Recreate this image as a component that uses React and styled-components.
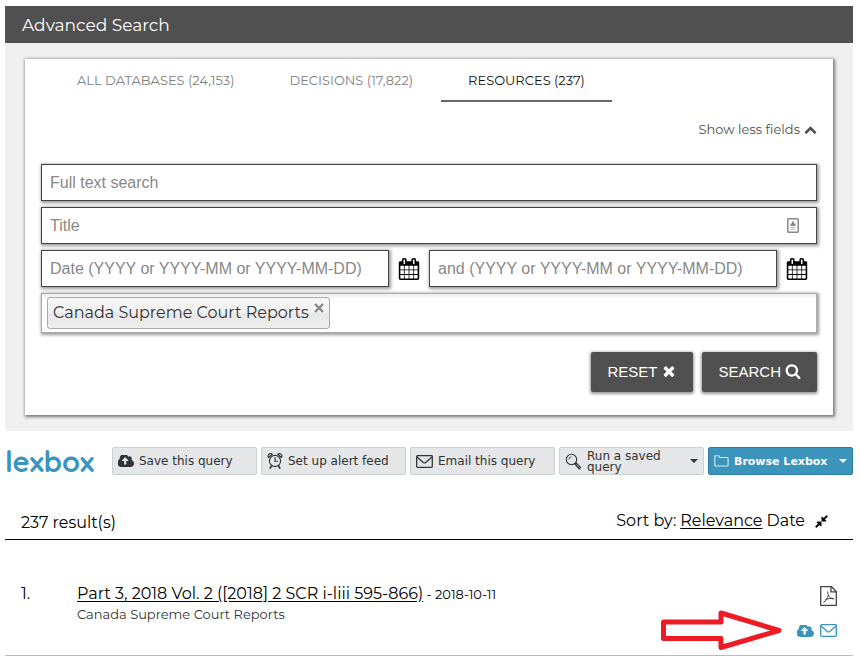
import styled, { createGlobalStyle } from "styled-components";

const GlobalStyle = createGlobalStyle`
  * {
    box-sizing: border-box;
  }

  body {
    margin: 0;
    background: #fff;
    color: #000;
    font-family: Montserrat, Inter, "Liberation Sans", sans-serif;
    font-size: 16px;
    font-weight: 400;
  }
`;

const Page = styled.main`
  padding: 6px 7px 0 5px;
`;

const Heading = styled.h1`
  margin: 0;
  padding: 1px 17px 0;
  background: #505050;
  color: #fff;
  font-size: 17px;
  font-weight: 400;
  line-height: 36px;
`;

const SearchArea = styled.section`
  padding: 16px 20px;
  background: #f0f0f0;
`;

const Card = styled.form`
  padding: 0 16px 23px;
  background: #fff;
  box-shadow: 1px 1px 3px 1px rgba(0, 0, 0, 0.5);
`;

const Tabs = styled.nav`
  display: flex;
  padding-left: 9px;
`;

const Tab = styled.a`
  margin-right: 1px;
  padding: 1px 27px 0;
  border-bottom: 2px solid ${({ $active }) => ($active ? "#666" : "transparent")};
  color: ${({ $active }) => ($active ? "#111" : "#808080")};
  font-size: 13px;
  line-height: 40px;
  text-decoration: none;
`;

const FieldsToggle = styled.button`
  display: flex;
  align-items: center;
  gap: 4px;
  margin: 17px 0 25px auto;
  padding: 0;
  border: 0;
  background: none;
  color: #505050;
  font-family: inherit;
  font-size: 13px;
  line-height: 20px;
`;

const Fields = styled.div`
  display: grid;
  gap: 6px;
`;

const Field = styled.label`
  display: flex;
  align-items: center;
  min-width: 0;
  height: 37px;
  padding: 0 17px 0 8px;
  border: 1px solid #444;
  background: #fff;
  box-shadow: 1px 1px 3px 1px rgba(0, 0, 0, 0.4);
`;

const Input = styled.input`
  flex: 1;
  min-width: 0;
  padding: 0;
  border: 0;
  outline: 0;
  background: none;
  font-family: "Liberation Sans", Arial, sans-serif;
  font-size: 16px;
  line-height: 20px;

  &::placeholder {
    color: #888;
    opacity: 1;
  }
`;

const DateRow = styled.div`
  display: grid;
  grid-template-columns: 1fr 40px 1fr 40px;
`;

const IconButton = styled.button`
  display: flex;
  align-items: center;
  justify-content: center;
  padding: 0;
  border: 0;
  background: none;
  color: #000;
`;

const TagField = styled.div`
  display: flex;
  height: 40px;
  padding: 3px 5px;
  border: 1px solid #aaa;
  background: linear-gradient(#eee 1%, #fff 15%);
  box-shadow: 1px 1px 3px 1px rgba(0, 0, 0, 0.4);
`;

const Tag = styled.span`
  display: flex;
  gap: 5px;
  padding: 0 5px;
  border: 1px solid #aaa;
  border-radius: 3px;
  background: linear-gradient(#f4f4f4 20%, #f0f0f0 50%, #e8e8e8 52%, #eee);
  color: #333;
  font-size: 16px;
  line-height: 29px;
`;

const TagRemove = styled.button`
  align-self: flex-start;
  display: flex;
  margin-top: 5px;
  padding: 0;
  border: 0;
  background: none;
  color: #888;
`;

const FormActions = styled.div`
  display: flex;
  justify-content: flex-end;
  gap: 9px;
  margin-top: 19px;
`;

const ActionButton = styled.button`
  display: flex;
  align-items: center;
  gap: 4px;
  height: 40px;
  padding: 0 16px 2px;
  border: 0;
  border-radius: 2px;
  background: #505050;
  box-shadow: 0 1px 3px 1px rgba(0, 0, 0, 0.4);
  color: #fff;
  font-family: "Liberation Sans", Arial, sans-serif;
  font-size: 15px;
`;

const Lexbox = styled.section`
  display: grid;
  grid-template-columns: 103px repeat(5, 1fr);
  align-items: center;
  gap: 4px;
  margin-top: 16px;
`;

const Logo = styled.span`
  color: #3a95bd;
  font-family: Quicksand, Nunito, Comfortaa, "Varela Round", Lato, sans-serif;
  font-size: 29px;
  font-weight: 700;
  line-height: 28px;
`;

const ToolButton = styled.button`
  display: flex;
  align-items: center;
  gap: 5px;
  height: 28px;
  padding: 0 5px;
  border: 1px solid ${({ $primary }) => ($primary ? "#2e7da0" : "#ccd0d2")};
  border-radius: 2px;
  background: ${({ $primary }) => ($primary ? "#3a94bb" : "#e4e6e8")};
  color: ${({ $primary }) => ($primary ? "#fff" : "#333")};
  font-family: "DejaVu Sans", Verdana, sans-serif;
  font-size: ${({ $primary }) => ($primary ? 11 : 12)}px;
  font-weight: ${({ $primary }) => ($primary ? 700 : 400)};
  line-height: 11px;
  text-align: left;

  svg {
    flex: none;
  }
`;

const ToolLabel = styled.span`
  flex: 1;
  padding-top: 1px;
`;

const ResultsBar = styled.header`
  display: flex;
  align-items: flex-end;
  justify-content: space-between;
  margin-top: 32px;
  padding: 0 24px 2px 16px;
  border-bottom: 1px solid #000;
  line-height: 28px;
`;

const Sort = styled.div`
  display: flex;
  gap: 4px;
  padding-bottom: 2px;
`;

const TextLink = styled.a`
  color: inherit;
  text-decoration: ${({ $underline }) => ($underline ? "underline" : "none")};
  text-underline-offset: 2px;
`;

const CompressButton = styled(IconButton)`
  margin-left: 5px;
`;

const ResultList = styled.ol`
  margin: 0;
  padding: 0;
  list-style: none;
`;

const Result = styled.li`
  display: grid;
  grid-template-columns: 56px 1fr auto;
  padding: 42px 16px 18px;
  border-bottom: 1px solid #bbb;
  line-height: 24px;
`;

const Small = styled.span`
  color: ${({ $muted }) => ($muted ? "#333" : "#000")};
  font-size: 13px;
`;

const Source = styled.div`
  line-height: 16px;
`;

const ResultActions = styled.div`
  display: flex;
  flex-direction: column;
  align-items: flex-end;
  gap: 18px;
  padding-top: 4px;
`;

const LexboxActions = styled.div`
  position: relative;
  display: flex;
  align-items: center;
  gap: 6px;
  color: #3a94bb;
`;

const IconLink = styled.a`
  display: flex;
  color: inherit;
`;

const Pointer = styled.svg`
  position: absolute;
  right: 54px;
  top: -14px;
`;

const glyphs = {
  times:
    "M1490 1322q0 40-28 68l-136 136q-28 28-68 28t-68-28l-294-294-294 294q-28 28-68 28t-68-28l-136-136q-28-28-28-68t28-68l294-294-294-294q-28-28-28-68t28-68l136-136q28-28 68-28t68 28l294 294 294-294q28-28 68-28t68 28l136 136q28 28 28 68t-28 68l-294 294 294 294q28 28 28 68z",
  search:
    "M1216 832q0-185-131.5-316.5t-316.5-131.5-316.5 131.5-131.5 316.5 131.5 316.5 316.5 131.5 316.5-131.5 131.5-316.5zm512 832q0 52-38 90t-90 38q-54 0-90-38l-343-342q-179 124-399 124-143 0-273.5-55.5t-225-150-150-225-55.5-273.5 55.5-273.5 150-225 225-150 273.5-55.5 273.5 55.5 225 150 150 225 55.5 273.5q0 220-124 399l343 343q37 37 37 90z",
  calendar:
    "M192 1664h288v-288h-288v288zm352 0h320v-288h-320v288zm-352-352h288v-320h-288v320zm352 0h320v-320h-320v320zm-352-384h288v-288h-288v288zm736 736h320v-288h-320v288zm-384-736h320v-288h-320v288zm768 736h288v-288h-288v288zm-384-352h320v-320h-320v320zm-352-864v-288q0-13-9.5-22.5t-22.5-9.5h-64q-13 0-22.5 9.5t-9.5 22.5v288q0 13 9.5 22.5t22.5 9.5h64q13 0 22.5-9.5t9.5-22.5zm736 864h288v-320h-288v320zm-384-384h320v-288h-320v288zm384 0h288v-288h-288v288zm32-480v-288q0-13-9.5-22.5t-22.5-9.5h-64q-13 0-22.5 9.5t-9.5 22.5v288q0 13 9.5 22.5t22.5 9.5h64q13 0 22.5-9.5t9.5-22.5zm384-64v1280q0 52-38 90t-90 38h-1408q-52 0-90-38t-38-90v-1280q0-52 38-90t90-38h128v-96q0-66 47-113t113-47h64q66 0 113 47t47 113v96h384v-96q0-66 47-113t113-47h64q66 0 113 47t47 113v96h128q52 0 90 38t38 90z",
  chevronUp:
    "M1683 1331l-166 165q-19 19-45 19t-45-19l-531-531-531 531q-19 19-45 19t-45-19l-166-165q-19-19-19-45.5t19-45.5l742-741q19-19 45-19t45 19l742 741q19 19 19 45.5t-19 45.5z",
  cloud:
    "M1216 864q0-14-9-23l-352-352q-9-9-23-9t-23 9l-351 351q-10 12-10 24 0 14 9 23t23 9h224v352q0 13 9.5 22.5t22.5 9.5h192q13 0 22.5-9.5t9.5-22.5v-352h224q13 0 22.5-9.5t9.5-22.5zm640 288q0 159-112.5 271.5t-271.5 112.5h-1088q-185 0-316.5-131.5t-131.5-316.5q0-130 70-240t188-165q-2-30-2-43 0-212 150-362t362-150q156 0 285.5 87t188.5 231q71-62 166-62 106 0 181 75t75 181q0 76-41 138 130 31 213.5 135.5t83.5 238.5z",
  compress:
    "M896 960v448q0 26-19 45t-45 19-45-19l-144-144-332 332q-10 10-23 10t-23-10l-114-114q-10-10-10-23t10-23l332-332-144-144q-19-19-19-45t19-45 45-19h448q26 0 45 19t19 45zm755-672q0 13-10 23l-332 332 144 144q19 19 19 45t-19 45-45 19h-448q-26 0-45-19t-19-45v-448q0-26 19-45t45-19 45 19l144 144 332-332q10-10 23-10t23 10l114 114q10 10 10 23z",
};

function Glyph({ name, size }) {
  return (
    <svg width={size} height={size} viewBox="0 0 1792 1792" fill="currentColor" aria-hidden="true">
      <path d={glyphs[name]} />
    </svg>
  );
}

function CloudIcon({ width, height }) {
  return (
    <svg width={width} height={height} viewBox="0 256 1856 1280" preserveAspectRatio="none" fill="currentColor" aria-hidden="true">
      <path d={glyphs.cloud} />
    </svg>
  );
}

function MailIcon() {
  return (
    <svg width="17" height="13" viewBox="0 0 17 13" fill="none" stroke="currentColor" strokeWidth="1.3" strokeLinejoin="round" aria-hidden="true">
      <rect x="0.7" y="0.7" width="15.6" height="11.6" rx="0.8" />
      <path d="M1 2L7.3 7.4Q8.5 8.3 9.7 7.4L16 2" />
    </svg>
  );
}

function AlarmIcon() {
  return (
    <svg width="16" height="18" viewBox="0 0 16 18" fill="none" stroke="currentColor" strokeWidth="1.1" strokeLinecap="round" aria-hidden="true">
      <circle cx="8" cy="9" r="5.6" />
      <path d="M8 5.5V9.3H10.6" />
      <path d="M1.6 5.5C0 3.2 2.6 0.4 5.2 2.2L1.6 5.5M14.4 5.5C16 3.2 13.4 0.4 10.8 2.2L14.4 5.5" />
      <path d="M4.6 13.6L3.2 16.2M11.4 13.6L12.8 16.2" strokeWidth="1.6" />
    </svg>
  );
}

function MagnifierIcon() {
  return (
    <svg width="17" height="17" viewBox="0 0 17 17" fill="none" stroke="currentColor" aria-hidden="true">
      <circle cx="6.5" cy="6.5" r="5.2" strokeWidth="1.1" />
      <path d="M3.8 6.5A2.8 2.8 0 0 1 6.5 3.8" strokeWidth="0.8" />
      <path d="M10.3 10.3L15.3 15.6" strokeWidth="3" />
      <path d="M11.6 11.4L14.8 14.8" stroke="#e4e6e8" strokeWidth="0.7" />
    </svg>
  );
}

function FolderIcon() {
  return (
    <svg width="15" height="12" viewBox="0 0 15 12" fill="none" stroke="#d6eaf2" strokeWidth="1.1" strokeLinejoin="round" aria-hidden="true">
      <path d="M0.8 10.2V1.6Q0.8 0.8 1.6 0.8H4.4Q5.2 0.8 5.3 1.6V2.5H13.2Q14.1 2.5 14.1 3.3V10.2Q14.1 11 13.2 11H1.6Q0.8 11 0.8 10.2Z" />
    </svg>
  );
}

function CaretIcon() {
  return (
    <svg width="8" height="4" viewBox="0 0 8 4" fill="currentColor" aria-hidden="true">
      <path d="M0 0H8L4 4Z" />
    </svg>
  );
}

function ContactIcon() {
  return (
    <svg width="12" height="15" viewBox="0 0 12 15" fill="none" aria-hidden="true">
      <rect x="0.8" y="0.8" width="10.4" height="13.4" rx="0.8" stroke="#888" strokeWidth="1.5" />
      <path d="M5 3.5H7V5.5H8.5V8H3.5V5.5H5Z" fill="#888" />
      <path d="M3.5 9.5H8.5M3.5 11.3H8.5" stroke="#bbb" />
    </svg>
  );
}

function PdfIcon() {
  return (
    <svg width="17" height="20" viewBox="0 0 17 20" fill="none" stroke="#444" strokeWidth="1.3" aria-hidden="true">
      <path d="M0.7 0.7H11.5L16.3 5.5V19.3H0.7Z" />
      <path d="M11 0.7V5.9H16.3" />
      <path d="M7.6 5.5C8 9.5 9.5 12.6 13.8 13M8.4 9.2C7.4 12.4 5.8 15 3.4 16.4M5.2 13.8C7.6 12.6 10.6 12.2 13.8 12.4" strokeWidth="1" />
    </svg>
  );
}

const tabs = [
  { label: "ALL DATABASES (24,153)" },
  { label: "DECISIONS (17,822)" },
  { label: "RESOURCES (237)", active: true },
];

export default function App() {
  return (
    <>
      <GlobalStyle />
      <Page>
        <Heading>Advanced Search</Heading>
        <SearchArea>
          <Card onSubmit={(e) => e.preventDefault()}>
            <Tabs>
              {tabs.map((tab) => (
                <Tab key={tab.label} href="#" $active={tab.active}>
                  {tab.label}
                </Tab>
              ))}
            </Tabs>
            <FieldsToggle type="button">
              Show less fields <Glyph name="chevronUp" size={13} />
            </FieldsToggle>
            <Fields>
              <Field>
                <Input aria-label="Full text search" placeholder="Full text search" />
              </Field>
              <Field>
                <Input aria-label="Title" placeholder="Title" />
                <ContactIcon />
              </Field>
              <DateRow>
                <Field>
                  <Input aria-label="Start date" placeholder="Date (YYYY or YYYY-MM or YYYY-MM-DD)" />
                </Field>
                <IconButton type="button" aria-label="Pick start date">
                  <Glyph name="calendar" size={22} />
                </IconButton>
                <Field>
                  <Input aria-label="End date" placeholder="and (YYYY or YYYY-MM or YYYY-MM-DD)" />
                </Field>
                <IconButton type="button" aria-label="Pick end date">
                  <Glyph name="calendar" size={22} />
                </IconButton>
              </DateRow>
              <TagField>
                <Tag>
                  Canada Supreme Court Reports
                  <TagRemove type="button" aria-label="Remove Canada Supreme Court Reports">
                    <svg width="10" height="10" viewBox="0 0 10 10" stroke="currentColor" strokeWidth="2.4" aria-hidden="true">
                      <path d="M1 1L9 9M9 1L1 9" />
                    </svg>
                  </TagRemove>
                </Tag>
              </TagField>
            </Fields>
            <FormActions>
              <ActionButton type="reset">
                RESET <Glyph name="times" size={16} />
              </ActionButton>
              <ActionButton type="submit">
                SEARCH <Glyph name="search" size={16} />
              </ActionButton>
            </FormActions>
          </Card>
        </SearchArea>

        <Lexbox>
          <Logo>lexbox</Logo>
          <ToolButton>
            <CloudIcon width={16} height={12} />
            <ToolLabel>Save this query</ToolLabel>
          </ToolButton>
          <ToolButton>
            <AlarmIcon />
            <ToolLabel>Set up alert feed</ToolLabel>
          </ToolButton>
          <ToolButton>
            <MailIcon />
            <ToolLabel>Email this query</ToolLabel>
          </ToolButton>
          <ToolButton>
            <MagnifierIcon />
            <ToolLabel>Run a saved query</ToolLabel>
            <CaretIcon />
          </ToolButton>
          <ToolButton $primary>
            <FolderIcon />
            <ToolLabel>Browse Lexbox</ToolLabel>
            <CaretIcon />
          </ToolButton>
        </Lexbox>

        <ResultsBar>
          <span>237 result(s)</span>
          <Sort>
            <span>Sort by:</span>
            <TextLink href="#" $underline>
              Relevance
            </TextLink>
            <TextLink href="#">Date</TextLink>
            <CompressButton aria-label="Collapse results">
              <Glyph name="compress" size={15} />
            </CompressButton>
          </Sort>
        </ResultsBar>
        <ResultList>
          <Result>
            <span>1.</span>
            <div>
              <TextLink href="#" $underline>
                Part 3, 2018 Vol. 2 ([2018] 2 SCR i-liii 595-866)
              </TextLink>
              <Small> - 2018-10-11</Small>
              <Source>
                <Small $muted>Canada Supreme Court Reports</Small>
              </Source>
            </div>
            <ResultActions>
              <IconLink href="#" aria-label="PDF">
                <PdfIcon />
              </IconLink>
              <LexboxActions>
                <Pointer width="122" height="41" viewBox="0 0 122 41" fill="none" stroke="#ed1c24" strokeWidth="5" aria-hidden="true">
                  <path d="M2.5 12H60V3L118 20.5L60 37.5V28.5H2.5Z" strokeLinejoin="round" />
                </Pointer>
                <IconLink href="#" aria-label="Save to Lexbox">
                  <CloudIcon width={17} height={12} />
                </IconLink>
                <IconLink href="#" aria-label="Email">
                  <MailIcon />
                </IconLink>
              </LexboxActions>
            </ResultActions>
          </Result>
        </ResultList>
      </Page>
    </>
  );
}
